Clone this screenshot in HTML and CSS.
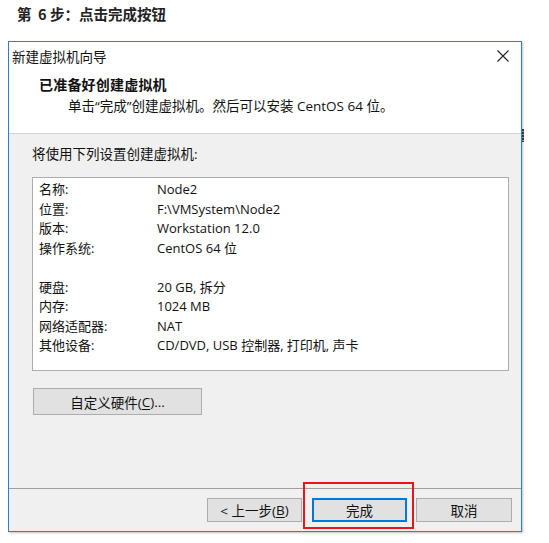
FILE: index.html
```html
<!DOCTYPE html>
<html lang="zh-CN">
<head>
<meta charset="utf-8">
<link rel="stylesheet" href="styles.css">
</head>
<body>
<div class="caption">第&nbsp; 6 步：点击完成按钮</div>
<div class="window">
  <div class="top">
    <div class="titlebar">
      <span class="title">新建虚拟机向导</span>
      <svg class="close" width="12" height="12" viewBox="0 0 12 12"><path d="M0.5 0.5 L11.5 11.5 M11.5 0.5 L0.5 11.5" stroke="#222" stroke-width="1.1" fill="none"/></svg>
    </div>
    <div class="head-title">已准备好创建虚拟机</div>
    <div class="head-sub">单击“完成”创建虚拟机。然后可以安装 CentOS 64 位。</div>
  </div>
  <div class="body">
    <div class="intro">将使用下列设置创建虚拟机:</div>
    <div class="list">
      <div class="row"><span class="k">名称:</span><span class="v">Node2</span></div>
      <div class="row"><span class="k">位置:</span><span class="v">F:\VMSystem\Node2</span></div>
      <div class="row"><span class="k">版本:</span><span class="v">Workstation 12.0</span></div>
      <div class="row"><span class="k">操作系统:</span><span class="v">CentOS 64 位</span></div>
      <div class="row"></div>
      <div class="row"><span class="k">硬盘:</span><span class="v">20 GB, 拆分</span></div>
      <div class="row"><span class="k">内存:</span><span class="v">1024 MB</span></div>
      <div class="row"><span class="k">网络适配器:</span><span class="v">NAT</span></div>
      <div class="row"><span class="k">其他设备:</span><span class="v">CD/DVD, USB 控制器, 打印机, 声卡</span></div>
    </div>
    <div class="btn custom">自定义硬件(<u>C</u>)...</div>
  </div>
  <div class="footer">
    <div class="btn back">&lt; 上一步(<u>B</u>)</div>
    <div class="finish-wrap">
      <div class="btn finish">完成</div>
      <div class="mark"></div>
    </div>
    <div class="btn cancel">取消</div>
  </div>
  <div class="edge-bit"></div>
</div>
</body>
</html>
```
FILE: styles.css
```css
* { box-sizing: border-box; }
body {
  margin: 0;
  background: #fff;
  font-family: "Open Sans", "Noto Sans CJK SC", sans-serif;
  color: #111;
  width: 549px;
  height: 543px;
  overflow: hidden;
}
.caption {
  padding: 5px 0 0 17px;
  height: 41px;
  font-size: 14.5px;
  line-height: 18px;
  font-weight: bold;
  color: #222;
  font-family: "Noto Sans CJK SC", sans-serif;
}
.window {
  margin-left: 8px;
  width: 514px;
  height: 491px;
  border: 1px solid #1d84d8;
  display: flex;
  flex-direction: column;
  box-shadow: 1px 1px 2px rgba(0,0,0,0.25);
  position: relative;
}
.top {
  background: #fff;
  height: 92px;
  border-bottom: 1px solid #d4d4d4;
}
.titlebar {
  height: 27px;
  display: flex;
  align-items: center;
  justify-content: space-between;
  padding: 1px 12px 0 3px;
}
.title {
  font-family: "Noto Sans CJK SC", sans-serif;
  font-size: 13.5px;
  line-height: 18px;
  color: #111;
}
.head-title {
  margin: 6px 0 0 30px;
  font-family: "Noto Sans CJK SC", sans-serif;
  font-weight: bold;
  font-size: 14px;
  line-height: 18px;
  letter-spacing: 0.2px;
}
.head-sub {
  margin: 4px 0 0 59px;
  font-size: 13.5px;
  line-height: 18px;
}
.body {
  flex: 1;
  background: #f0f0f0;
  border-bottom: 1px solid #a0a0a0;
  padding: 11px 12px 0 23px;
}
.intro {
  font-size: 13.5px;
  line-height: 18px;
}
.list {
  margin-top: 14px;
  width: 477px;
  height: 194px;
  background: #fff;
  border: 1px solid #adadad;
  padding: 2px 0 0 6px;
}
.row {
  display: flex;
  height: 19.5px;
  line-height: 19.5px;
  font-size: 13px;
}
.k { width: 118px; }
.btn {
  background: #e1e1e1;
  border: 1px solid #adadad;
  font-size: 13.5px;
  display: flex;
  align-items: center;
  justify-content: center;
  height: 27px;
}
.btn u { text-decoration: underline; text-underline-offset: 2px; }
.custom {
  margin-top: 17px;
  width: 169px;
  margin-left: 1px;
}
.footer {
  height: 42px;
  display: flex;
  align-items: flex-start;
  padding: 9px 0 0 198px;
  background: #f0f0f0;
}
.footer .btn { height: 24px; }
.back { width: 95px; }
.finish-wrap {
  position: relative;
  margin-left: 10px;
}
.finish {
  width: 95px;
  border: 2px solid #0078d7;
}
.mark {
  position: absolute;
  left: -9px;
  top: -16px;
  width: 111px;
  height: 47px;
  border: 2px solid #e8161c;
}
.cancel { width: 96px; margin-left: 9px; }
.edge-bit {
  position: absolute;
  right: -3px;
  top: 87px;
  width: 2px;
  height: 13px;
  background: repeating-linear-gradient(#333 0 2px, #999 2px 3px);
}
```
